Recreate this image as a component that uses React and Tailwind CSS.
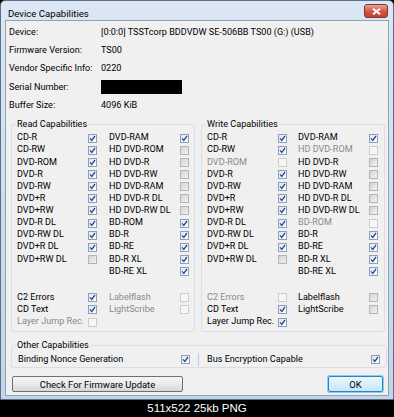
import React from "react";

const info = [
  ["Device:", "[0:0:0] TSSTcorp BDDVDW SE-506BB TS00 (G:) (USB)"],
  ["Firmware Version:", "TS00"],
  ["Vendor Specific Info:", "0220"],
  ["Serial Number:", null],
  ["Buffer Size:", "4096 KiB"],
];

// state: on = checked, off = unchecked grey, dis = disabled (grey text, pale box)
const readCaps = {
  left: [
    ["CD-R", "on"], ["CD-RW", "on"], ["DVD-ROM", "on"], ["DVD-R", "on"],
    ["DVD-RW", "on"], ["DVD+R", "on"], ["DVD+RW", "on"], ["DVD-R DL", "on"],
    ["DVD-RW DL", "on"], ["DVD+R DL", "on"], ["DVD+RW DL", "off"],
  ],
  right: [
    ["DVD-RAM", "on"], ["HD DVD-ROM", "off"], ["HD DVD-R", "off"], ["HD DVD-RW", "off"],
    ["HD DVD-RAM", "off"], ["HD DVD-R DL", "off"], ["HD DVD-RW DL", "off"], ["BD-ROM", "on"],
    ["BD-R", "on"], ["BD-RE", "on"], ["BD-R XL", "on"], ["BD-RE XL", "on"],
  ],
  extraLeft: [["C2 Errors", "on"], ["CD Text", "on"], ["Layer Jump Rec.", "dis"]],
  extraRight: [["Labelflash", "dis"], ["LightScribe", "dis"]],
};

const writeCaps = {
  left: [
    ["CD-R", "on"], ["CD-RW", "on"], ["DVD-ROM", "dis"], ["DVD-R", "on"],
    ["DVD-RW", "on"], ["DVD+R", "on"], ["DVD+RW", "on"], ["DVD-R DL", "on"],
    ["DVD-RW DL", "on"], ["DVD+R DL", "on"], ["DVD+RW DL", "off"],
  ],
  right: [
    ["DVD-RAM", "on"], ["HD DVD-ROM", "dis"], ["HD DVD-R", "off"], ["HD DVD-RW", "off"],
    ["HD DVD-RAM", "off"], ["HD DVD-R DL", "off"], ["HD DVD-RW DL", "off"], ["BD-ROM", "dis"],
    ["BD-R", "on"], ["BD-RE", "on"], ["BD-R XL", "on"], ["BD-RE XL", "on"],
  ],
  extraLeft: [["C2 Errors", "dis"], ["CD Text", "on"], ["Layer Jump Rec.", "on"]],
  extraRight: [["Labelflash", "off"], ["LightScribe", "off"]],
};

const Box = ({ state }) => {
  if (state === "on") {
    return (
      <span className="w-[9px] h-[9px] shrink-0 border border-[#8e9fb8] bg-gradient-to-br from-[#dfe6f0] to-[#ffffff] flex items-center justify-center">
        <svg width="7" height="7" viewBox="0 0 7 7">
          <path d="M1 3.4 L2.8 5.4 L6 1" fill="none" stroke="#2b4a92" strokeWidth="1.3" />
        </svg>
      </span>
    );
  }
  if (state === "off") {
    return <span className="w-[9px] h-[9px] shrink-0 border border-[#b4b4b4] bg-gradient-to-br from-[#d4d4d4] to-[#f2f2f2]" />;
  }
  return <span className="w-[9px] h-[9px] shrink-0 border border-[#cdcdcd] bg-[#f7f7f7]" />;
};

const Row = ({ label, state, w }) => (
  <div className="flex items-center h-[12.15px]">
    <span className={`${w} whitespace-nowrap ${state === "dis" ? "text-[#8a8a8a]" : "text-black"}`}>{label}</span>
    <Box state={state} />
  </div>
);

const Group = ({ title, caps, gap }) => (
  <fieldset className="w-[184px] h-[214px] border border-[#d5dfe5] rounded-[3px] px-[5px] pt-[1.5px] pb-0">
    <legend className="px-[1px] -ml-[1px] leading-[12px]">{title}</legend>
    <div className={`flex ${gap}`}>
      <div className="flex flex-col">
        {caps.left.map(([l, s]) => (
          <Row key={l} label={l} state={s} w="w-[71px]" />
        ))}
      </div>
      <div className="flex flex-col">
        {caps.right.map(([l, s]) => (
          <Row key={l} label={l} state={s} w="w-[71px]" />
        ))}
      </div>
    </div>
    <div className={`flex ${gap} mt-[14px]`}>
      <div className="flex flex-col">
        {caps.extraLeft.map(([l, s]) => (
          <Row key={l} label={l} state={s} w="w-[71px]" />
        ))}
      </div>
      <div className="flex flex-col">
        {caps.extraRight.map(([l, s]) => (
          <Row key={l} label={l} state={s} w="w-[71px]" />
        ))}
      </div>
    </div>
  </fieldset>
);

export default function App() {
  return (
    <div className="w-[394px] h-[417px] bg-black flex flex-col font-['Roboto','Liberation_Sans',sans-serif] text-[9.1px] text-black">
      <div className="h-[400px] shrink-0 flex flex-col px-[4px] pb-[3px] rounded-t-[5px] border border-[#5f6f82] bg-gradient-to-b from-[#dbe7f4] to-[#c3d5ea]">
        <div className="h-[19px] shrink-0 flex items-start justify-between pl-[3px]">
          <span className="mt-[6px] text-[9.6px]">Device Capabilities</span>
          <div className="mt-[3px] mr-[1px] w-[24px] h-[14px] rounded-[3px] border border-[#7d3a31] bg-gradient-to-b from-[#e8a493] via-[#d2594a] to-[#c4402f] flex items-center justify-center">
            <svg width="9" height="7" viewBox="0 0 9 7">
              <path d="M1 0.8 L8 6.2 M8 0.8 L1 6.2" stroke="#ffffff" strokeWidth="2" />
            </svg>
          </div>
        </div>
        <div className="flex-1 bg-[#f0f0f0] border border-[#8ea2b8] flex flex-col px-[3px] pt-[3px]">
          <div className="flex flex-col">
            {info.map(([k, v]) => (
              <div key={k} className="flex items-center h-[18.1px]">
                <span className="w-[92px] whitespace-nowrap">{k}</span>
                {v ? <span className="whitespace-nowrap">{v}</span> : <span className="w-[81px] h-[14px] bg-black" />}
              </div>
            ))}
          </div>
          <div className="flex gap-[6px] pl-[2px] mt-[4px]">
            <Group title="Read Capabilities" caps={readCaps} gap="gap-[12px]" />
            <Group title="Write Capabilities" caps={writeCaps} gap="gap-[11px]" />
          </div>
          <fieldset className="mt-[7px] ml-[2px] w-[374px] h-[29px] border border-[#d5dfe5] rounded-[3px] px-[6px] pt-0 pb-0">
            <legend className="px-[1px] -ml-[2px] leading-[12px]">Other Capabilities</legend>
            <div className="flex items-center h-[13px] mt-[1.5px]">
              <span className="w-[163px] whitespace-nowrap">Binding Nonce Generation</span>
              <Box state="on" />
              <span className="ml-[8px] w-[1px] h-[13px] bg-[#c9c9c9]" />
              <span className="ml-[8px] w-[164px] whitespace-nowrap">Bus Encryption Capable</span>
              <Box state="on" />
            </div>
          </fieldset>
          <div className="flex justify-between items-center mt-[8px] pl-[3px] pr-[2px]">
            <button className="w-[171px] h-[16px] rounded-[2px] border border-[#707070] bg-gradient-to-b from-[#f4f4f4] via-[#ebebeb] to-[#d6d6d6] text-[9.4px] leading-none">
              Check For Firmware Update
            </button>
            <button className="w-[55px] h-[16px] rounded-[2px] border border-[#3c7fb1] bg-gradient-to-b from-[#eaf6fd] via-[#d9f0fc] to-[#bee6fd] shadow-[0_0_0_1px_#7fd0f5] text-[9.4px] leading-none">
              OK
            </button>
          </div>
        </div>
      </div>
      <div className="flex-1 flex items-center justify-center text-white text-[11.5px] font-['Liberation_Sans',Arial,sans-serif]">
        511x522 25kb PNG
      </div>
    </div>
  );
}
